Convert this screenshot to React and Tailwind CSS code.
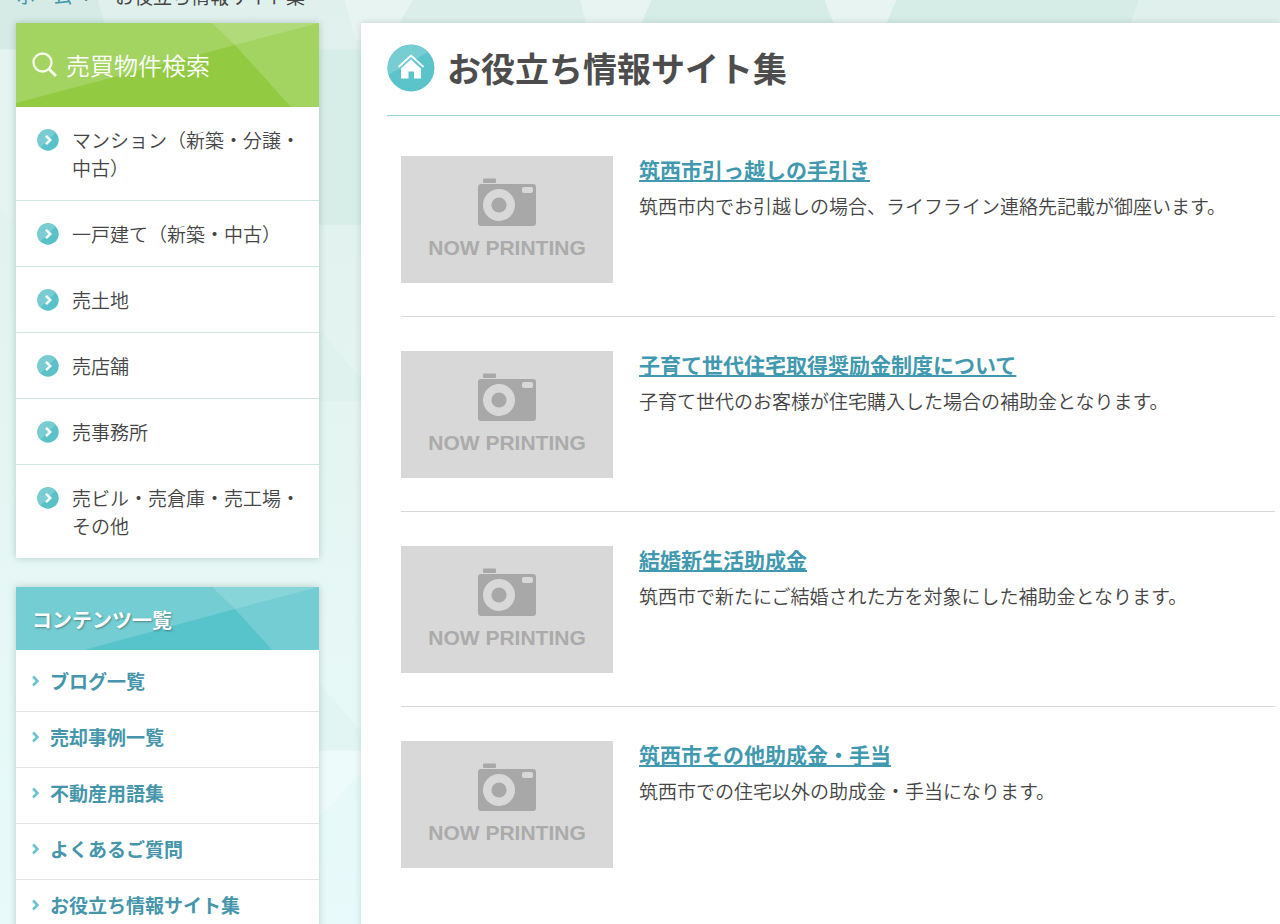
import React from "react";

const fontStack = "font-['Noto_Sans_CJK_JP','Noto_Sans',sans-serif]";

const searchItems = [
  "マンション（新築・分譲・中古）",
  "一戸建て（新築・中古）",
  "売土地",
  "売店舗",
  "売事務所",
  "売ビル・売倉庫・売工場・その他",
];

const contentItems = [
  "ブログ一覧",
  "売却事例一覧",
  "不動産用語集",
  "よくあるご質問",
  "お役立ち情報サイト集",
];

const sites = [
  { title: "筑西市引っ越しの手引き", text: "筑西市内でお引越しの場合、ライフライン連絡先記載が御座います。" },
  { title: "子育て世代住宅取得奨励金制度について", text: "子育て世代のお客様が住宅購入した場合の補助金となります。" },
  { title: "結婚新生活助成金", text: "筑西市で新たにご結婚された方を対象にした補助金となります。" },
  { title: "筑西市その他助成金・手当", text: "筑西市での住宅以外の助成金・手当になります。" },
];

function Backdrop() {
  return (
    <svg className="absolute inset-0 -z-10 h-full w-full" viewBox="0 0 1280 924" preserveAspectRatio="xMinYMin slice" aria-hidden="true">
      <defs>
        <linearGradient id="sky" x1="0" y1="0" x2="0" y2="1">
          <stop offset="0" stopColor="#e0f0ec" />
          <stop offset="0.5" stopColor="#e5f5f2" />
          <stop offset="1" stopColor="#e8fbfa" />
        </linearGradient>
      </defs>
      <rect width="1280" height="924" fill="url(#sky)" />
      <path d="M0 0H97L110 49H0Z" fill="#d6ebe5" />
      <path d="M340 0H408L385 40H352Z" fill="#e8f4f2" />
      <path d="M408 0H573L590 40H385Z" fill="#dceeea" />
      <path d="M573 0H644L622 60H590Z" fill="#e8f4f2" />
      <path d="M644 0H815L838 60H617Z" fill="#d6ece6" />
      <path d="M815 0H886L862 60H838Z" fill="#e8f4f2" />
      <path d="M886 0H1125L1105 60H860Z" fill="#d6ece6" />
      <path d="M315 49H365V222H315Z" fill="#d7ede8" />
      <path d="M315 325L365 385V396H315Z" fill="#dff2ee" />
      <path d="M315 675L365 732V742H315Z" fill="#e2f5f3" />
      <path d="M315 742H365V755L315 808Z" fill="#edfbfa" />
      <path d="M0 49H20V225L0 205Z" fill="#e5f4f0" />
    </svg>
  );
}

function ArrowBadge() {
  return (
    <svg className="mt-[3px] h-[22px] w-[22px] shrink-0" viewBox="0 0 22 22" aria-hidden="true">
      <circle cx="11" cy="11" r="10.7" fill="#5bc1c9" />
      <path d="M3.4 18.6A10.7 10.7 0 0 1 18.6 3.4Z" fill="#79ccd1" />
      <path d="M9 6.8L13.2 11L9 15.2" fill="none" stroke="#fff" strokeWidth="2.6" />
    </svg>
  );
}

function Facets({ base, light, lighter, kind }) {
  return (
    <svg className="absolute inset-0 h-full w-full" viewBox={kind === "tall" ? "0 0 303 84" : "0 0 303 63"} preserveAspectRatio="none" aria-hidden="true">
      <rect width="303" height="84" fill={light} />
      <path d={kind === "tall" ? "M0 80L219 22L275 84H0Z" : "M68 63L219 22L256 63Z"} fill={base} />
      <path d="M196 0H303L219 22Z" fill={lighter} />
    </svg>
  );
}

function NowPrinting() {
  return (
    <svg className="h-[127px] w-[212px] shrink-0" viewBox="0 0 212 127" role="img" aria-label="NOW PRINTING">
      <rect width="212" height="127" fill="#d8d8d8" />
      <rect x="82" y="22.5" width="13" height="4.5" rx="1" fill="#a8a8a8" />
      <rect x="77" y="28" width="58" height="42" rx="3" fill="#a8a8a8" />
      <circle cx="98" cy="49" r="16" fill="#d8d8d8" />
      <circle cx="98" cy="49" r="7.6" fill="#a8a8a8" />
      <rect x="121" y="31" width="11" height="6" rx="2" fill="#d8d8d8" />
      <text x="106" y="99" textAnchor="middle" fontFamily="'Liberation Sans', sans-serif" fontWeight="700" fontSize="21" fill="#ababab">NOW PRINTING</text>
    </svg>
  );
}

export default function App() {
  return (
    <div className={`relative isolate min-h-screen overflow-hidden text-[#444] ${fontStack}`}>
      <Backdrop />
      <nav aria-label="breadcrumb" className="flex h-[23px] items-end gap-3 overflow-hidden pb-[13px] pl-4 text-[19px] leading-7">
        <a href="#home" className="text-[#4596ab]">ホーム</a>
        <span>&gt;</span>
        <span className="ml-2">お役立ち情報サイト集</span>
      </nav>

      <div className="flex gap-[42px] pl-4">
        <aside className="flex w-[303px] shrink-0 flex-col gap-[29px]">
          <section className="bg-white shadow-[0_0_7px_rgba(0,60,50,0.22)]">
            <h2 className="relative flex h-[84px] items-center gap-2 pl-4 text-2xl font-[350] text-white">
              <Facets kind="tall" base="#92cb41" light="#a3d360" lighter="#b1da7b" />
              <svg className="relative h-[26px] w-[26px]" viewBox="0 0 26 26" fill="none" stroke="#f4fbe6" strokeWidth="2.4" aria-hidden="true">
                <circle cx="10.5" cy="10.5" r="9" />
                <path d="M17 17L24 24" strokeWidth="3" />
              </svg>
              <span className="relative">売買物件検索</span>
            </h2>
            <ul className="divide-y divide-[#cfe6e3]">
              {searchItems.map((t) => (
                <li key={t}>
                  <a href="#search" className="flex gap-[13px] pt-[19px] pr-4 pb-[18px] pl-[21px] text-[19px] leading-7 font-[350]">
                    <ArrowBadge />
                    <span>{t}</span>
                  </a>
                </li>
              ))}
            </ul>
          </section>

          <section className="bg-white shadow-[0_0_7px_rgba(0,60,50,0.22)]">
            <h2 className="relative flex h-[63px] items-center pt-[2px] pl-4 text-xl font-bold text-white">
              <Facets kind="short" base="#57c3cb" light="#73cdd2" lighter="#87d4d9" />
              <span className="relative [text-shadow:1px_1px_2px_rgba(0,0,0,0.35)]">コンテンツ一覧</span>
            </h2>
            <ul className="divide-y divide-[#e2e4e4] pt-[6px]">
              {contentItems.map((t) => (
                <li key={t}>
                  <a href="#contents" className="flex items-center gap-[10px] pt-[11px] pb-4 pl-4 text-[19px] leading-7 font-bold text-[#4596ab]">
                    <svg className="h-3 w-2" viewBox="0 0 8 12" fill="none" stroke="#6cc5cb" strokeWidth="2.6" aria-hidden="true">
                      <path d="M1 1.5L5.5 6L1 10.5" />
                    </svg>
                    {t}
                  </a>
                </li>
              ))}
            </ul>
          </section>
        </aside>

        <main className="min-w-0 flex-1 bg-white pl-[26px] shadow-[0_0_7px_rgba(0,60,50,0.16)]">
          <header className="flex h-[93px] items-center gap-3 border-b border-b-[#9bd6da] pb-[3px]">
            <svg className="h-12 w-12" viewBox="0 0 48 48" aria-hidden="true">
              <circle cx="24" cy="24" r="23.5" fill="#5bc4cb" />
              <path d="M1.5 31A23.5 23.5 0 0 1 41 8Z" fill="#76ced3" />
              <path d="M11.5 23L24 11.5L36.5 23" fill="none" stroke="#fff" strokeWidth="1.8" />
              <path d="M14 24.5L24 15.5L34 24.5V34.5H27V27.5H21.5V34.5H14Z" fill="#fff" />
            </svg>
            <h1 className="text-[34px] font-bold text-[#4d4d4d]">お役立ち情報サイト集</h1>
          </header>
          <ul className="divide-y divide-[#d8d8d8] pt-[6px] pr-[5px] pl-[14px]">
            {sites.map((s) => (
              <li key={s.title} className="flex gap-[26px] pt-[34px] pb-[33px]">
                <NowPrinting />
                <div className="min-w-0">
                  <h3 className="text-[21px] leading-[26px] font-bold">
                    <a href="#site" className="text-[#4199b0] underline decoration-2 underline-offset-2">{s.title}</a>
                  </h3>
                  <p className="mt-[10px] text-[19px] leading-7 font-[350]">{s.text}</p>
                </div>
              </li>
            ))}
          </ul>
        </main>
      </div>
    </div>
  );
}
